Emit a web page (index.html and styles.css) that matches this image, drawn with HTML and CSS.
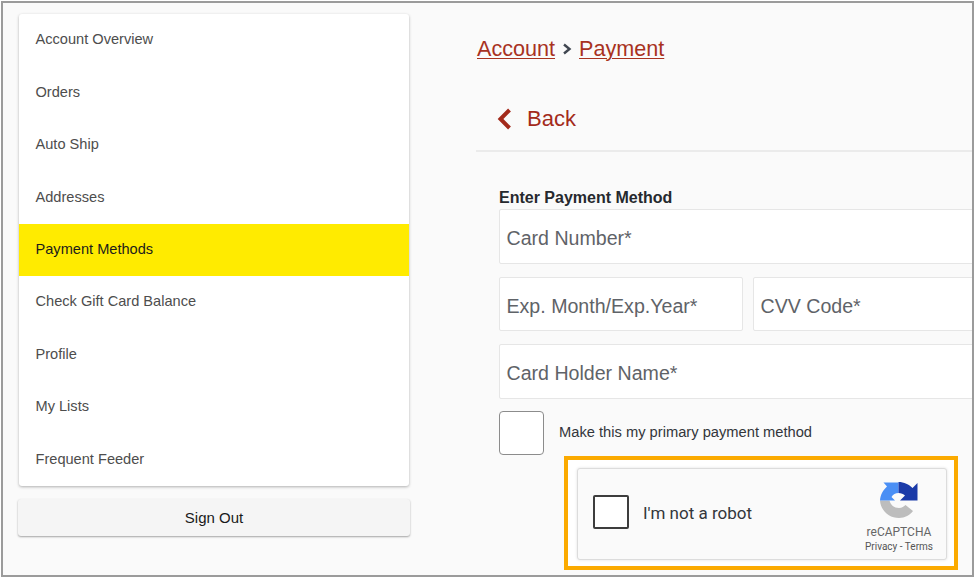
FILE: index.html
```html
<!DOCTYPE html>
<html lang="en">
  <head>
    <meta charset="UTF-8" />
    <title>Payment</title>
    <link rel="stylesheet" href="styles.css">
  </head>
  <body>
    <div class="frame">
      <!-- Side menu -->
      <aside class="side">
        <nav class="menu">
          <a class="menu-item">Account Overview</a>
          <a class="menu-item">Orders</a>
          <a class="menu-item">Auto Ship</a>
          <a class="menu-item">Addresses</a>
          <a class="menu-item active">Payment Methods</a>
          <a class="menu-item">Check Gift Card Balance</a>
          <a class="menu-item">Profile</a>
          <a class="menu-item">My Lists</a>
          <a class="menu-item">Frequent Feeder</a>
        </nav>
        <button class="sign-out">Sign Out</button>
      </aside>

      <!-- Payment form -->
      <main class="content">
        <div class="crumbs">
          <a class="crumb">Account</a>
          <svg class="crumb-sep" width="10" height="12" viewBox="0 0 10 12"><path d="M2 1.500 L7.500 6 L2 10.500" fill="none" stroke="#3f4650" stroke-width="2.400"/></svg>
          <a class="crumb">Payment</a>
        </div>
        <div class="back">
          <svg width="15" height="22" viewBox="0 0 15 22"><path d="M12.500 2 L3.500 11 L12.500 20" fill="none" stroke="#a32a1b" stroke-width="4"/></svg>
          <span>Back</span>
        </div>
        <form class="pay-form">
          <h2 class="form-title">Enter Payment Method</h2>
          <div class="field">Card Number*</div>
          <div class="field-row">
            <div class="field short">Exp. Month/Exp.Year*</div>
            <div class="field">CVV Code*</div>
          </div>
          <div class="field">Card Holder Name*</div>
          <div class="primary-row">
            <span class="check"></span>
            <span class="primary-label">Make this my primary payment method</span>
          </div>
          <div class="highlight">
            <div class="captcha">
              <span class="captcha-check"></span>
              <span class="captcha-text">I'm not a robot</span>
              <div class="captcha-brand">
                <svg class="captcha-logo" width="38" height="36" viewBox="0 0 38 36">
                  <path fill="#bdbdbd" d="M0 18.500 H9.500 C10.500 23 14 26 19 26 C22 26 24 24.500 25.500 23 L33 29 C30 33 25 36 19 36 C8.500 36 0.500 28 0 18.500 Z"/>
                  <path fill="#4a8ff5" d="M0 18.500 C0.300 13 3 8 7 4.500 L3.500 0.500 H18.500 V11 C15.500 11 13 12.500 11.500 15 L15 18.500 Z"/>
                  <path fill="#1a3aa8" d="M18.500 0 C24 0 29 2.500 32.500 6 L37.500 1 V18.500 H20 L25 13.500 C23.500 12 21 11 18.500 11 Z"/>
                </svg>
                <span class="captcha-name">reCAPTCHA</span>
                <span class="captcha-links">Privacy - Terms</span>
              </div>
            </div>
          </div>
        </form>
      </main>
    </div>
  </body>
</html>
```

FILE: styles.css
```css
* {
  box-sizing: border-box;
}
html,
body {
  margin: 0;
  height: 100%;
  background: #fff;
}
body {
  padding: 1px;
  font-family: "Liberation Sans", Arial, sans-serif;
  overflow: hidden;
}
.frame {
  display: flex;
  width: 973px;
  height: 576px;
  padding: 11px 0 0 15px;
  background: #fafafa;
  border: 2px solid #9b9b9b;
  overflow: hidden;
}

/* side menu */
.side {
  flex: 0 0 392px;
  width: 392px;
}
.menu {
  display: flex;
  flex-direction: column;
  margin: 0 1px;
  background: #fff;
  border-radius: 3px;
  box-shadow: 0 1px 3px rgba(0, 0, 0, 0.3);
}
.menu-item {
  display: flex;
  align-items: center;
  height: 52.44px;
  padding: 0 0 2px 16.5px;
  font-size: 14.6px;
  color: #4d4d4d;
}
.menu-item.active {
  background: #ffeb00;
  color: #1c1c1c;
}
.sign-out {
  display: block;
  width: 392px;
  height: 37px;
  margin-top: 13px;
  background: #f5f5f5;
  border: 0;
  border-radius: 3px;
  box-shadow: 0 1px 2px rgba(0, 0, 0, 0.35);
  font-family: inherit;
  font-size: 15px;
  color: #1a1a1a;
}

/* main column */
.content {
  flex: 0 0 500px;
  margin-left: 66px;
}
.crumbs {
  display: flex;
  align-items: center;
  gap: 7px;
  height: 70px;
  padding-left: 1px;
  font-size: 21.6px;
}
.crumb {
  color: #a8321f;
  text-decoration: underline;
  text-underline-offset: 2px;
  text-decoration-thickness: 1px;
}
.back {
  display: flex;
  align-items: center;
  gap: 15px;
  height: 68px;
  padding: 4px 0 0 21px;
  border-bottom: 2px solid #ebebeb;
  font-size: 22px;
  color: #a32a1b;
}
.pay-form {
  padding-left: 23px;
}
.form-title {
  margin: 37px 0 2px;
  height: 18px;
  font-size: 16px;
  line-height: 18px;
  font-weight: bold;
  color: #26292e;
}
.field {
  flex: 1;
  display: flex;
  align-items: center;
  width: 480px;
  height: 54.5px;
  padding: 5px 0 0 6.5px;
  background: #fff;
  border: 1px solid #e6e6e6;
  border-radius: 2px;
  font-size: 19.6px;
  color: #5f6368;
}
.field-row {
  display: flex;
  gap: 10px;
  margin: 13px 0;
}
.field.short {
  flex: 0 0 244px;
  width: 244px;
}
.primary-row {
  display: flex;
  align-items: center;
  gap: 15px;
  margin-top: 12.5px;
}
.check {
  width: 45px;
  height: 44px;
  background: #fff;
  border: 1px solid #8c8c8c;
  border-radius: 4px;
}
.primary-label {
  padding-bottom: 2px;
  font-size: 14.7px;
  color: #33363b;
}

/* captcha box with the orange callout */
.highlight {
  width: 394px;
  height: 114px;
  margin: 0.5px 0 0 65px;
  padding: 8px 7px 6px 9px;
  background: #fff;
  border: 4px solid #fbaa00;
}
.captcha {
  display: flex;
  align-items: center;
  height: 92px;
  padding-left: 15px;
  background: #fafafa;
  border: 1px solid #dcdcdc;
  border-radius: 3px;
  box-shadow: 0 0 3px rgba(0, 0, 0, 0.12);
}
.captcha-check {
  width: 36px;
  height: 34px;
  margin-bottom: 3px;
  background: #fff;
  border: 2px solid #3d3d3d;
  border-radius: 2px;
}
.captcha-text {
  margin-left: 14px;
  padding-bottom: 2px;
  font-family: Roboto, sans-serif;
  font-size: 17px;
  color: #33363b;
}
.captcha-brand {
  display: flex;
  flex-direction: column;
  align-items: center;
  align-self: flex-start;
  margin: 0 7px 0 auto;
  padding-top: 13px;
  width: 80px;
}
.captcha-logo {
  margin-bottom: 7px;
}
.captcha-name {
  font-family: Roboto, sans-serif;
  font-size: 12px;
  line-height: 14px;
  color: #666;
}
.captcha-links {
  font-family: Roboto, sans-serif;
  font-size: 10px;
  line-height: 15px;
  color: #555;
}
```
